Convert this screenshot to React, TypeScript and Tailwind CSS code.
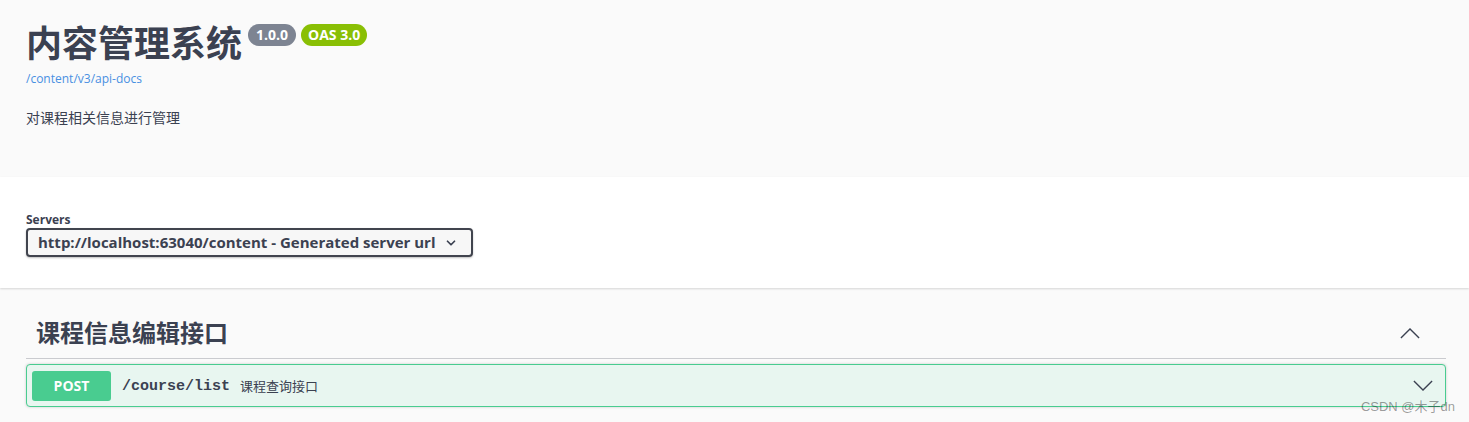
import { ChevronDown } from "lucide-react";

const font = { fontFamily: '"Open Sans", "Noto Sans CJK SC", sans-serif' };

function Chevron({ up, className }: { up?: boolean; className?: string }) {
  return (
    <svg viewBox="0 0 22 12" className={className} fill="none" stroke="currentColor" strokeWidth={1.5}>
      <polyline points={up ? "1,11 11,1 21,11" : "1,1 11,11 21,1"} />
    </svg>
  );
}

export default function App() {
  return (
    <div className="relative w-[1469px] h-[422px] overflow-hidden bg-[#fafafa] text-[#3b4151]" style={font}>
      {/* Info */}
      <div className="h-[177px] pl-[26px] pr-[23px] pt-[22px]">
        <div className="flex items-start">
          <h2 className="text-[36px] leading-[44px] font-bold text-[#3b4151]">内容管理系统</h2>
          <div className="flex gap-[5px] ml-[6px] mt-[2px]">
            <span className="h-[22px] px-[8px] rounded-[57px] bg-[#7d8492] text-white text-[14px] font-bold leading-[22px]">1.0.0</span>
            <span className="h-[22px] px-[7px] rounded-[57px] bg-[#89bf04] text-white text-[14px] font-bold leading-[22px]">OAS 3.0</span>
          </div>
        </div>
        <a className="block text-[12px] leading-[18px] text-[#4990e2] mt-[4px]">/content/v3/api-docs</a>
        <p className="text-[14px] leading-[20px] mt-[20px] text-[#3b4151]">对课程相关信息进行管理</p>
      </div>

      {/* Servers */}
      <div className="h-[111px] bg-white shadow-[0_1px_2px_0_rgba(0,0,0,0.15)] pl-[26px] pr-[23px] pt-[34px]">
        <div className="text-[12px] font-bold leading-[16px] mt-[1px]">Servers</div>
        <div className="w-[447px] h-[29px] border-2 border-[#41444e] rounded-[4px] bg-[#f7f7f7] shadow-[0_1px_2px_0_rgba(0,0,0,0.25)] flex items-center pl-[10px] pr-[13px]">
          <span className="flex-1 text-[15px] whitespace-nowrap font-bold">http://localhost:63040/content - Generated server url</span>
          <ChevronDown className="w-[14px] h-[14px]" strokeWidth={3} />
        </div>
      </div>

      {/* Tag section */}
      <div className="pl-[26px] pr-[23px] pt-[20px]">
        <div className="flex items-center h-[51px] pl-[10px] pr-[26px] border-b border-[#3b415140]">
          <h3 className="flex-1 text-[24px] font-bold leading-[30px]">课程信息编辑接口</h3>
          <Chevron up className="w-[20px] h-[11px]" />
        </div>
        <div className="mt-[5px] h-[43px] border border-[#49cc90] rounded-[4px] bg-[#e8f6f0] shadow-[0_0_3px_rgba(0,0,0,0.19)] flex items-center pl-[5px] pr-[12px]">
          <span className="w-[79px] h-[30px] rounded-[3px] bg-[#49cc90] text-white text-[14px] font-bold flex items-center justify-center">POST</span>
          <span className="ml-[11px] mt-[3px] text-[15px] font-semibold text-[#3b4151]" style={{ fontFamily: '"Liberation Mono", monospace' }}>/course/list</span>
          <span className="ml-[10px] mt-[2px] text-[13px] text-[#3b4151] flex-1">课程查询接口</span>
          <Chevron className="w-[20px] h-[11px]" />
        </div>
      </div>

      {/* watermark */}
      <div className="absolute right-[14px] bottom-[7px] text-[13px] leading-[16px] text-[#00000066]" style={{ fontFamily: '"Liberation Sans", "Noto Sans CJK SC", sans-serif' }}>
        CSDN @木子dn
      </div>
    </div>
  );
}
